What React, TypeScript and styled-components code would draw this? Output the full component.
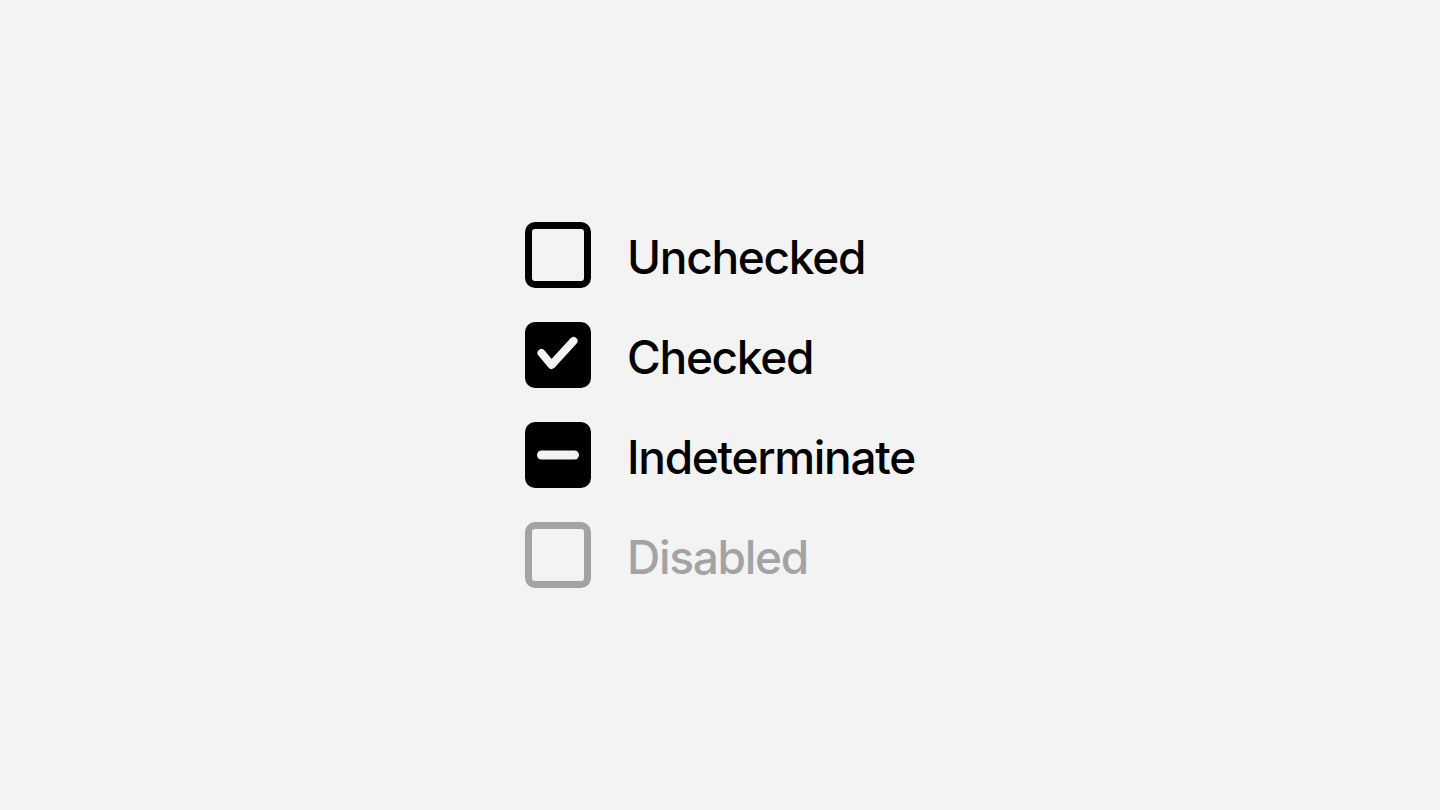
import styled, { createGlobalStyle } from "styled-components"

const Global = createGlobalStyle`
html, body {
margin: 0;
padding: 0;
background: #f3f3f3;
}
body {
font-family: Inter, "Liberation Sans", sans-serif;
}
`

const Page = styled.main`
height: 810px;
display: flex;
align-items: center;
justify-content: center;
`

const List = styled.div`
display: flex;
flex-direction: column;
gap: 34px;
`

const Row = styled.label`
display: flex;
align-items: center;
gap: 36px;
`

const Box = styled.span<{ $filled?: boolean; $disabled?: boolean }>`
box-sizing: border-box;
width: 66px;
height: 66px;
border-radius: 10px;
border: 7px solid ${(p) => (p.$disabled ? "#a3a3a3" : "#000")};
background: ${(p) => (p.$filled ? "#000" : "transparent")};
position: relative;
flex-shrink: 0;
`

const Mark = styled.svg`
position: absolute;
inset: -7px;
width: 66px;
height: 66px;
`

const Label = styled.span<{ $disabled?: boolean }>`
font-size: 46px;
font-weight: 500;
letter-spacing: -1.3px;
color: ${(p) => (p.$disabled ? "#a3a3a3" : "#000")};
line-height: 1;
padding-top: 4px;
`

export default function App() {
    return (
        <>
            <Global />
            <Page>
                <List>
                    <Row>
                        <Box />
                        <Label>Unchecked</Label>
                    </Row>
                    <Row>
                        <Box $filled>
                            <Mark viewBox="0 0 66 66">
                                <path d="M16.5 31 L26.5 43 L48.5 19" fill="none" stroke="#f3f3f3" strokeWidth="8" strokeLinecap="round" strokeLinejoin="round" />
                            </Mark>
                        </Box>
                        <Label>Checked</Label>
                    </Row>
                    <Row>
                        <Box $filled>
                            <Mark viewBox="0 0 66 66">
                                <path d="M16.5 33 L49.5 33" fill="none" stroke="#f3f3f3" strokeWidth="9" strokeLinecap="round" />
                            </Mark>
                        </Box>
                        <Label>Indeterminate</Label>
                    </Row>
                    <Row>
                        <Box $disabled />
                        <Label $disabled>Disabled</Label>
                    </Row>
                </List>
            </Page>
        </>
    )
}
